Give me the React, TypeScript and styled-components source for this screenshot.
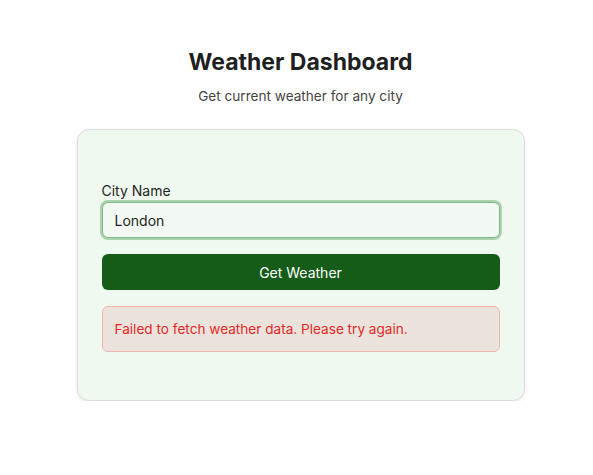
import React, { useState } from 'react';
import styled, { createGlobalStyle } from 'styled-components';

const GlobalStyle = createGlobalStyle`
  html, body {
    margin: 0;
    padding: 0;
    background: #ffffff;
    font-family: Inter, "Noto Sans", sans-serif;
    color: #1f1f1f;
  }
  * {
    box-sizing: border-box;
  }
`;

const Page = styled.div`
  width: 593px;
  display: flex;
  flex-direction: column;
  align-items: center;
  padding: 48px 0 0 8px;
`;

const Title = styled.h1`
  margin: 0;
  font-size: 23px;
  font-weight: 700;
  line-height: 29px;
  color: #1f1f1f;
`;

const Subtitle = styled.p`
  margin: 10px 0 0;
  font-size: 13.6px;
  line-height: 18px;
  color: #444;
`;

const Card = styled.div`
  margin-top: 24px;
  width: 448px;
  padding: 24px;
  background: #eff9ef;
  border: 1px solid #dcdcdc;
  border-radius: 12px;
  box-shadow: 0 2px 4px rgba(0, 0, 0, 0.08);
`;

const Form = styled.form`
  display: flex;
  flex-direction: column;
  padding-top: 28px;
  padding-bottom: 24px;
`;

const Label = styled.label`
  font-size: 14px;
  line-height: 18px;
  color: #1f1f1f;
  margin-bottom: 2px;
`;

const Input = styled.input`
  height: 36px;
  width: 100%;
  padding: 0 12px;
  font-family: inherit;
  font-size: 14px;
  color: #1f1f1f;
  caret-color: #1f1f1f;
  background: #f3faf3;
  border: 1px solid #84b588;
  border-radius: 6px;
  box-shadow: 0 0 0 2px #abd3ad;
  outline: none;
`;

const Button = styled.button`
  margin-top: 16px;
  height: 36px;
  width: 100%;
  border: none;
  border-radius: 6px;
  background: #145c17;
  color: #ffffff;
  font-family: inherit;
  font-size: 14px;
  cursor: pointer;
`;

const ErrorBox = styled.div`
  margin-top: 16px;
  padding: 13px 12px;
  background: #ece4dc;
  border: 1px solid #f0b6ad;
  border-radius: 6px;
  color: #e42828;
  font-size: 13.6px;
  line-height: 18px;
`;

export default function App() {
  const [city, setCity] = useState('London');
  return (
    <>
      <GlobalStyle />
      <Page>
        <Title>Weather Dashboard</Title>
        <Subtitle>Get current weather for any city</Subtitle>
        <Card>
          <Form onSubmit={(e) => e.preventDefault()}>
            <Label htmlFor="city">City Name</Label>
            <Input
              id="city"
              value={city}
              autoFocus
              onChange={(e) => setCity(e.target.value)}
            />
            <Button type="submit">Get Weather</Button>
            <ErrorBox>Failed to fetch weather data. Please try again.</ErrorBox>
          </Form>
        </Card>
      </Page>
    </>
  );
}
